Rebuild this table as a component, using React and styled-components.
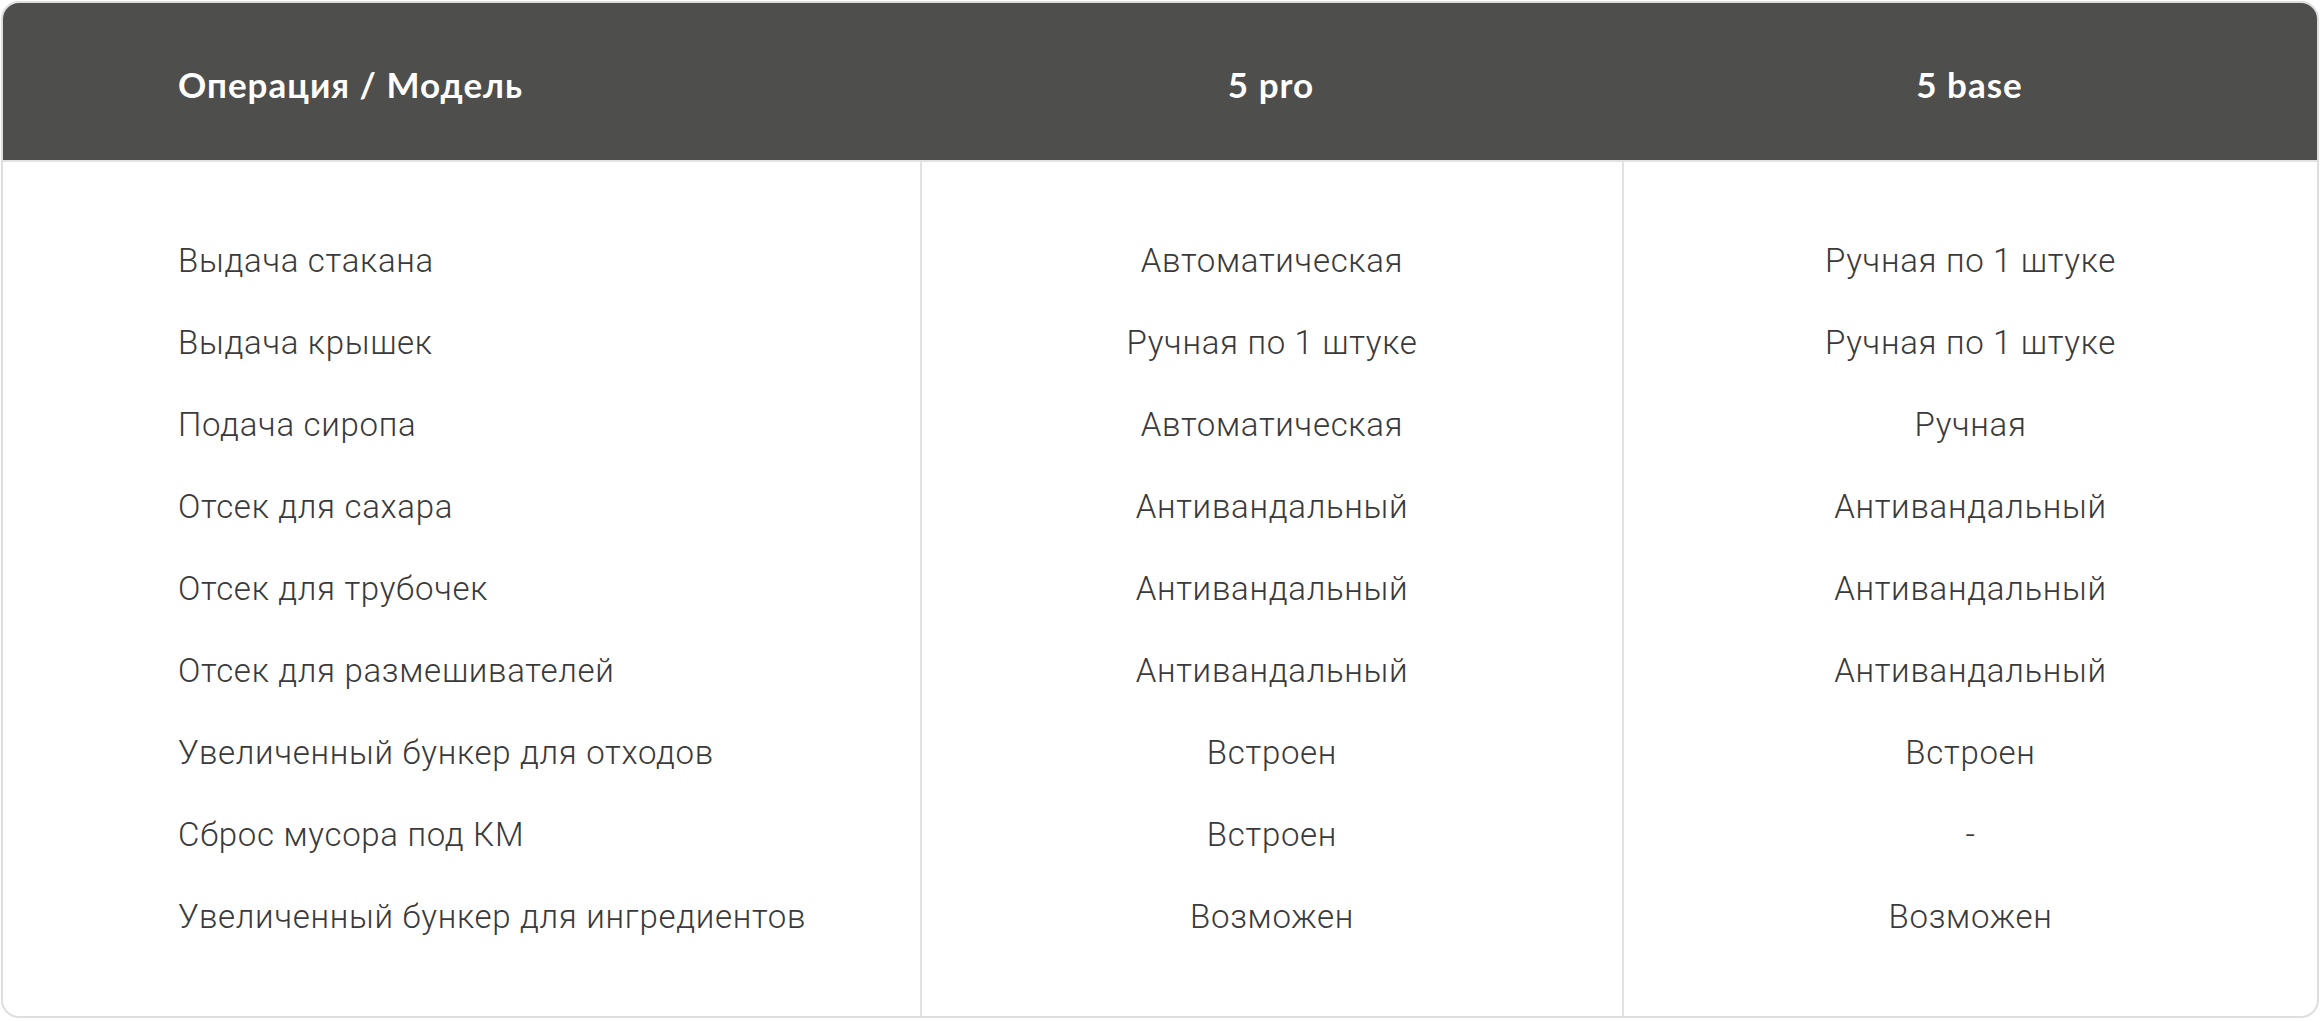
import React from "react";
import styled, { createGlobalStyle } from "styled-components";

const Global = createGlobalStyle`
  html, body { margin: 0; padding: 0; background: #ffffff; }
  body { font-family: Roboto, "Open Sans", sans-serif; }
  * { box-sizing: border-box; }
`;

const Page = styled.div`
  padding: 1px;
  width: 2320px;
`;

const Card = styled.div`
  border: 2px solid #dedede;
  border-radius: 18px;
  overflow: hidden;
  background: #fff;
`;

const cols = "917px 702px 1fr";

const Header = styled.div`
  display: grid;
  grid-template-columns: ${cols};
  height: 159px;
  background: #4e4e4c;
  border-bottom: 2px solid #e2e2e2;
`;

const HeadCell = styled.div`
  display: flex;
  align-items: center;
  justify-content: ${(p) => (p.$first ? "flex-start" : "center")};
  padding-left: ${(p) => (p.$first ? "175px" : "0")};
  padding-top: 5px;
  color: #ffffff;
  font-family: Lato, "Open Sans", sans-serif;
  font-weight: 700;
  font-size: 35px;
  letter-spacing: 1px;
`;

const Body = styled.div`
  display: grid;
  grid-template-columns: ${cols};
`;

const Column = styled.div`
  display: flex;
  flex-direction: column;
  align-items: ${(p) => (p.$first ? "flex-start" : "center")};
  padding: 57px 0 59px ${(p) => (p.$first ? "175px" : "0")};
  border-left: ${(p) => (p.$first ? "none" : "2px solid #e2e2e2")};
`;

const Cell = styled.div`
  height: 82px;
  display: flex;
  align-items: center;
  color: #3a3a3a;
  font-family: Roboto, "Open Sans", sans-serif;
  font-weight: 300;
  font-size: 33px;
  letter-spacing: 0.7px;
  white-space: nowrap;
`;

const rows = [
  ["Выдача стакана", "Автоматическая", "Ручная по 1 штуке"],
  ["Выдача крышек", "Ручная по 1 штуке", "Ручная по 1 штуке"],
  ["Подача сиропа", "Автоматическая", "Ручная"],
  ["Отсек для сахара", "Антивандальный", "Антивандальный"],
  ["Отсек для трубочек", "Антивандальный", "Антивандальный"],
  ["Отсек для размешивателей", "Антивандальный", "Антивандальный"],
  ["Увеличенный бункер для отходов", "Встроен", "Встроен"],
  ["Сброс мусора под КМ", "Встроен", "-"],
  ["Увеличенный бункер для ингредиентов", "Возможен", "Возможен"],
];

const headers = ["Операция / Модель", "5 pro", "5 base"];

export default function App() {
  return (
    <Page>
      <Global />
      <Card>
        <Header>
          {headers.map((h, i) => (
            <HeadCell key={h} $first={i === 0}>
              {h}
            </HeadCell>
          ))}
        </Header>
        <Body>
          {[0, 1, 2].map((c) => (
            <Column key={c} $first={c === 0}>
              {rows.map((r, i) => (
                <Cell key={i}>{r[c]}</Cell>
              ))}
            </Column>
          ))}
        </Body>
      </Card>
    </Page>
  );
}
